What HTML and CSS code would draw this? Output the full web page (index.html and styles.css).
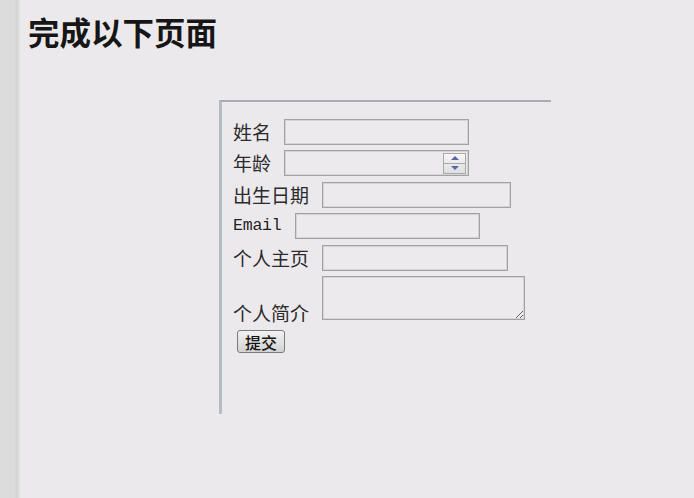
FILE: index.html
```html
<!DOCTYPE html>
<html lang="zh-CN">
<head>
<meta charset="utf-8">
<title>完成以下页面</title>
<link rel="stylesheet" href="styles.css">
</head>
<body>
<div class="sidebar"></div>
<main class="main">
  <h1 class="title">完成以下页面</h1>
  <form class="panel">
    <div class="row">
      <label class="label">姓名</label>
      <input class="field" type="text">
    </div>
    <div class="row">
      <label class="label">年龄</label>
      <div class="field num-field">
        <input class="num-input" type="text">
        <span class="spinner">
          <span class="spin-half"><svg width="10" height="6" viewBox="0 0 10 6"><path d="M1 5 L5 1 L9 5 Z" fill="#5a63a6"/></svg></span>
          <span class="spin-half"><svg width="10" height="6" viewBox="0 0 10 6"><path d="M1 1 L5 5 L9 1 Z" fill="#5a63a6"/></svg></span>
        </span>
      </div>
    </div>
    <div class="row">
      <label class="label">出生日期</label>
      <input class="field field-date" type="text">
    </div>
    <div class="row">
      <label class="label label-mono">Email</label>
      <input class="field" type="text">
    </div>
    <div class="row">
      <label class="label">个人主页</label>
      <input class="field field-url" type="text">
    </div>
    <div class="row row-end">
      <label class="label label-low">个人简介</label>
      <textarea class="area"></textarea>
    </div>
    <div class="row">
      <button class="submit" type="button">提交</button>
    </div>
  </form>
</main>
</body>
</html>
```
FILE: styles.css
```css
html, body {
  height: 100%;
}
body {
  margin: 0;
  background: #ebe9eb;
  display: flex;
  font-family: "Noto Sans CJK SC", sans-serif;
  color: #2a2a2a;
}
.sidebar {
  width: 20px;
  flex: none;
  background: linear-gradient(to right, #dcdcdc 0, #dcdcdc 14px, #d3d3d3 17px, #e4e4e4 20px);
}
.main {
  flex: 1;
  padding-left: 8px;
}
.title {
  margin: 8px 0 0;
  font-size: 31.5px;
  font-weight: bold;
  line-height: 46px;
  color: #161616;
}
.panel {
  margin: 46px 0 0 191px;
  width: 332px;
  height: 314px;
  box-sizing: border-box;
  border-top: 2px solid #a4aeb3;
  border-left: 3px solid #b3bdc2;
  padding: 17px 0 0 11px;
  display: flex;
  flex-direction: column;
  gap: 5.4px;
}
.row {
  display: flex;
  align-items: center;
  gap: 13px;
}
.row-end {
  align-items: flex-end;
}
.label {
  font-size: 19px;
  line-height: 24px;
  color: #2b2b2b;
}
.label-mono {
  font-family: "Liberation Mono", monospace;
  font-size: 16.5px;
  letter-spacing: -0.2px;
  color: #222;
}
.label-low {
  margin-bottom: -5px;
}
.field {
  width: 185px;
  height: 26px;
  box-sizing: border-box;
  border: 1px solid #a2a2a2;
  box-shadow: inset 0 0 0 1px #d4d4d4;
  background: #eceaec;
  margin: 0;
  padding: 0 3px;
  font: 15px "Noto Sans CJK SC", sans-serif;
}
.field-date {
  width: 189px;
}
.field-url {
  width: 186px;
}
.num-field {
  display: flex;
  align-items: center;
  padding: 0 2px 0 0;
}
.num-input {
  flex: 1;
  min-width: 0;
  border: 0;
  background: transparent;
  height: 20px;
  padding: 0;
}
.spinner {
  width: 23px;
  height: 21px;
  box-sizing: border-box;
  border: 1px solid #a9a9a9;
  display: flex;
  flex-direction: column;
  background: linear-gradient(#f6f6f6, #dedede);
}
.spin-half {
  flex: 1;
  display: flex;
  align-items: center;
  justify-content: center;
}
.spin-half + .spin-half {
  border-top: 1px solid #a9a9a9;
}
.area {
  width: 203px;
  height: 44px;
  box-sizing: border-box;
  border: 1px solid #a2a2a2;
  box-shadow: inset 0 0 0 1px #d4d4d4;
  background: #eceaec;
  margin: 0;
  padding: 2px;
}
.submit {
  margin: 5px 0 0 4px;
  width: 48px;
  height: 23px;
  border: 1px solid #7a7a7a;
  border-radius: 3px;
  background: linear-gradient(#f2f2f2, #d2d2d2);
  font: 16px "Noto Sans CJK SC", sans-serif;
  font-weight: 500;
  color: #141414;
  padding: 0;
  line-height: 20px;
}
```
